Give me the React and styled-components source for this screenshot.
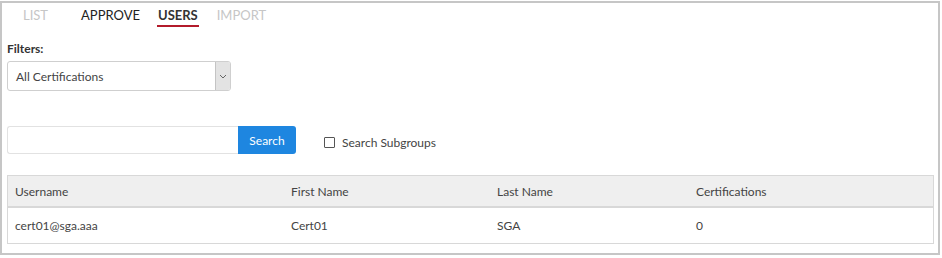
import React from "react";
import styled, { createGlobalStyle } from "styled-components";

const Global = createGlobalStyle`
  body {
    margin: 0;
    font-family: "Lato", "Open Sans", sans-serif;
    background: #fff;
    color: #444;
  }
  * { box-sizing: border-box; }
`;

const Frame = styled.div`
  margin: 1px 0 0 0;
  width: 940px;
  height: 254px;
  border: 2px solid #c6c6c6;
  padding: 0 5px;
  background: #fff;
`;

const Tabs = styled.div`
  display: flex;
  height: 30px;
  padding-left: 16px;
`;

const Tab = styled.div`
  font-size: 13px;
  padding-top: 6px;
  margin-right: ${(p) => p.$gap}px;
  color: ${(p) => (p.$active ? "#333" : p.$muted ? "#c6c6c6" : "#222")};
  font-weight: ${(p) => (p.$active ? 700 : 400)};
  height: 24px;
  border-bottom: 2px solid ${(p) => (p.$active ? "#b31b2b" : "transparent")};
  padding-left: ${(p) => (p.$active ? 1 : 0)}px;
  padding-right: ${(p) => (p.$active ? 1 : 0)}px;
  line-height: 13px;
`;

const Label = styled.div`
  font-size: 12px;
  font-weight: 700;
  color: #333;
  margin-top: 8px;
  height: 20px;
`;

const Select = styled.div`
  width: 224px;
  height: 30px;
  border: 1px solid #cfcfcf;
  border-radius: 3px;
  display: flex;
  align-items: stretch;
  overflow: hidden;
`;

const SelectText = styled.div`
  flex: 1;
  font-size: 12px;
  color: #444;
  padding-left: 8px;
  display: flex;
  align-items: center;
`;

const Arrow = styled.div`
  width: 15px;
  background: #e3e3e3;
  border-left: 1px solid #c4c4c4;
  display: flex;
  align-items: center;
  justify-content: center;
`;

const SearchRow = styled.div`
  display: flex;
  align-items: center;
  margin-top: 35px;
  height: 28px;
`;

const Input = styled.div`
  width: 231px;
  height: 28px;
  border: 1px solid #e2e2e2;
  border-right: none;
  border-radius: 3px 0 0 3px;
`;

const Button = styled.div`
  width: 58px;
  height: 28px;
  background: #1e86e0;
  color: #fff;
  font-size: 12px;
  border-radius: 0 3px 3px 0;
  display: flex;
  align-items: center;
  justify-content: center;
`;

const Check = styled.label`
  display: flex;
  align-items: center;
  margin-left: 28px;
  margin-top: 4px;
  font-size: 12px;
  color: #444;
  gap: 7px;
`;

const Box = styled.span`
  width: 11px;
  height: 11px;
  border: 1px solid #555;
  border-radius: 1px;
  display: inline-block;
`;

const Table = styled.div`
  margin-top: 21px;
  width: 927px;
  border: 1px solid #d8d8d8;
`;

const Row = styled.div`
  display: grid;
  grid-template-columns: 276px 206px 199px 1fr;
  height: ${(p) => (p.$head ? 32 : 35)}px;
  align-items: center;
  background: ${(p) => (p.$head ? "#efefef" : "#fff")};
  border-bottom: ${(p) => (p.$head ? "2px solid #d8d8d8" : "none")};
  font-size: 12px;
  color: #444;
`;

const Cell = styled.div`
  padding-left: 7px;
  white-space: nowrap;
`;

const columns = ["Username", "First Name", "Last Name", "Certifications"];
const rows = [["cert01@sga.aaa", "Cert01", "SGA", "0"]];

export default function App() {
  return (
    <>
      <Global />
      <Frame>
        <Tabs>
          <Tab $muted $gap={33}>LIST</Tab>
          <Tab $gap={17}>APPROVE</Tab>
          <Tab $active $gap={18}>USERS</Tab>
          <Tab $muted $gap={0}>IMPORT</Tab>
        </Tabs>
        <Label>Filters:</Label>
        <Select>
          <SelectText>All Certifications</SelectText>
          <Arrow>
            <svg width="8" height="5" viewBox="0 0 8 5">
              <path d="M1 1l3 3 3-3" fill="none" stroke="#666" strokeWidth="1" />
            </svg>
          </Arrow>
        </Select>
        <SearchRow>
          <Input />
          <Button>Search</Button>
          <Check>
            <Box />
            Search Subgroups
          </Check>
        </SearchRow>
        <Table>
          <Row $head>
            {columns.map((c) => (
              <Cell key={c}>{c}</Cell>
            ))}
          </Row>
          {rows.map((r, i) => (
            <Row key={i}>
              {r.map((v, j) => (
                <Cell key={j}>{v}</Cell>
              ))}
            </Row>
          ))}
        </Table>
      </Frame>
    </>
  );
}
